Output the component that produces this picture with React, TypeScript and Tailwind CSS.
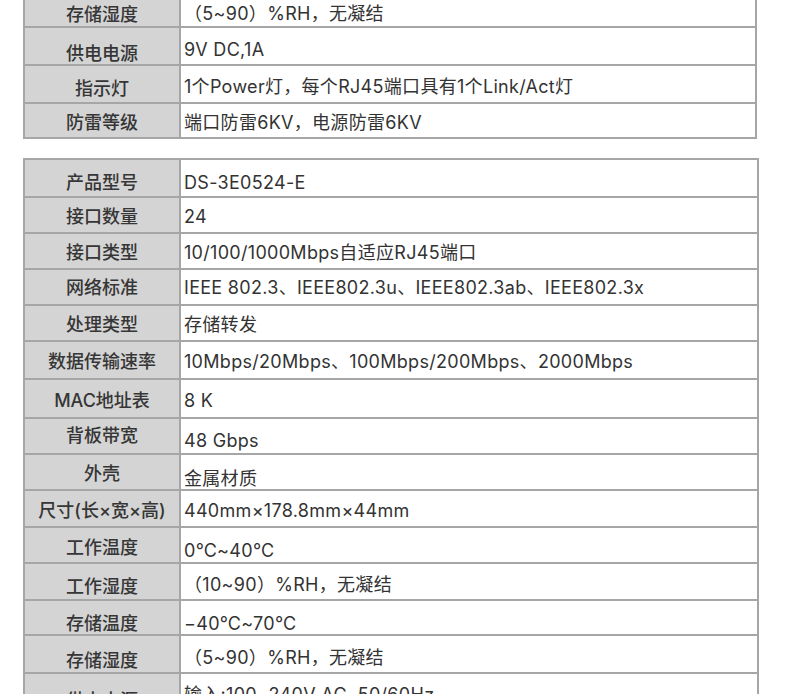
type Row = {
  label: string
  value: string
  h: string
  lp: string
  vp: string
}

const topRows: Row[] = [
  { label: "存储湿度", value: "（5~90）%RH，无凝结", h: "h-[40px]", lp: "pt-[16px]", vp: "pt-[14px]" },
  { label: "供电电源", value: "9V DC,1A", h: "h-[38px]", lp: "pt-[16px]", vp: "pt-[8px]" },
  { label: "指示灯", value: "1个Power灯，每个RJ45端口具有1个Link/Act灯", h: "h-[38px]", lp: "pt-[10px]", vp: "pt-[6px]" },
  { label: "防雷等级", value: "端口防雷6KV，电源防雷6KV", h: "h-[33px]", lp: "pt-[4px]", vp: "pt-[4px]" },
]

const bottomRows: Row[] = [
  { label: "产品型号", value: "DS-3E0524-E", h: "h-[38px]", lp: "pt-[10px]", vp: "pt-[10px]" },
  { label: "接口数量", value: "24", h: "h-[36px]", lp: "pt-[4px]", vp: "pt-[4px]" },
  { label: "接口类型", value: "10/100/1000Mbps自适应RJ45端口", h: "h-[36px]", lp: "pt-[4px]", vp: "pt-[4px]" },
  { label: "网络标准", value: "IEEE 802.3、IEEE802.3u、IEEE802.3ab、IEEE802.3x", h: "h-[36px]", lp: "pt-[2px]", vp: "pt-[2px]" },
  { label: "处理类型", value: "存储转发", h: "h-[36px]", lp: "pt-[4px]", vp: "pt-[4px]" },
  { label: "数据传输速率", value: "10Mbps/20Mbps、100Mbps/200Mbps、2000Mbps", h: "h-[38px]", lp: "pt-[4px]", vp: "pt-[4px]" },
  { label: "MAC地址表", value: "8 K", h: "h-[39px]", lp: "pt-[4px]", vp: "pt-[4px]" },
  { label: "背板带宽", value: "48 Gbps", h: "h-[36px]", lp: "pt-0", vp: "pt-[10px]" },
  { label: "外壳", value: "金属材质", h: "h-[36px]", lp: "pt-[4px]", vp: "pt-[14px]" },
  { label: "尺寸(长×宽×高)", value: "440mm×178.8mm×44mm", h: "h-[37px]", lp: "pt-[4px]", vp: "pt-[4px]" },
  { label: "工作温度", value: "0℃~40℃", h: "h-[36px]", lp: "pt-[6px]", vp: "pt-[12px]" },
  { label: "工作湿度", value: "（10~90）%RH，无凝结", h: "h-[37px]", lp: "pt-[10px]", vp: "pt-[6px]" },
  { label: "存储温度", value: "−40℃~70℃", h: "h-[35px]", lp: "pt-[12px]", vp: "pt-[12px]" },
  { label: "存储湿度", value: "（5~90）%RH，无凝结", h: "h-[38px]", lp: "pt-[14px]", vp: "pt-[8px]" },
  { label: "供电电源", value: "输入:100~240V AC, 50/60Hz", h: "h-[38px]", lp: "pt-[16px]", vp: "pt-[4px]" },
]

const SpecTable = ({ rows, className }: { rows: Row[]; className: string }) => {
  return (
    <div className={`border-2 border-[#a6a6a6] ml-[23px] ${className}`}>
      {rows.map((r, i) => (
        <div
          key={i}
          className={`flex ${r.h} ${i < rows.length - 1 ? "border-b-2 border-[#a6a6a6]" : ""}`}
        >
          <div
            className={`w-[156px] shrink-0 flex items-center justify-center bg-[#d4d4d4] border-r-2 border-[#a6a6a6] text-[18px] leading-[20px] font-medium text-[#363636] whitespace-nowrap ${r.lp}`}
          >
            {r.label}
          </div>
          <div
            className={`flex-1 flex items-center pl-[3px] text-[18px] leading-[20px] tracking-[0.3px] text-[#333333] whitespace-nowrap ${r.vp}`}
          >
            {r.value}
          </div>
        </div>
      ))}
    </div>
  )
}

export default function App() {
  return (
    <div
      className="w-[790px] h-[694px] overflow-hidden bg-white"
      style={{ fontFamily: 'Inter, "Noto Sans CJK SC", sans-serif' }}
    >
      <SpecTable rows={topRows} className="w-[734px] mt-[-14px]" />
      <SpecTable rows={bottomRows} className="w-[736px] mt-[19px]" />
    </div>
  )
}
